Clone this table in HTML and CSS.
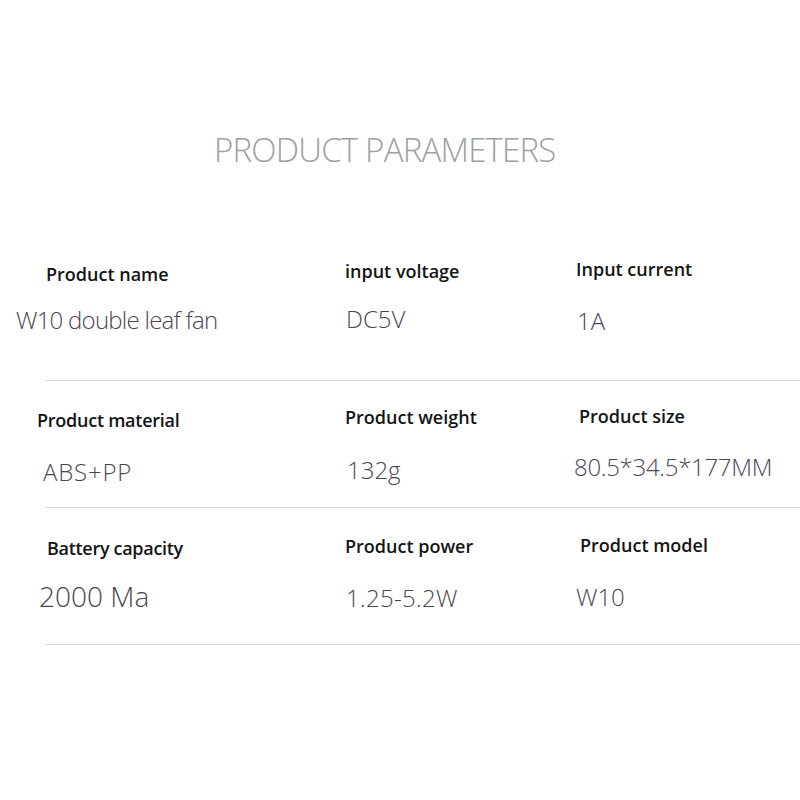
FILE: index.html
```html
<!DOCTYPE html>
<html>
<head>
<meta charset="utf-8">
<link rel="stylesheet" href="styles.css">
</head>
<body>
<h1 class="title">PRODUCT PARAMETERS</h1>
<div class="table">
  <div class="row row-1">
    <div class="cell a1"><div class="label">Product name</div><div class="value">W10 double leaf fan</div></div>
    <div class="cell a2"><div class="label">input voltage</div><div class="value">DC5V</div></div>
    <div class="cell a3"><div class="label">Input current</div><div class="value">1A</div></div>
  </div>
  <div class="rule"></div>
  <div class="row row-2">
    <div class="cell b1"><div class="label">Product material</div><div class="value">ABS+PP</div></div>
    <div class="cell b2"><div class="label">Product weight</div><div class="value">132g</div></div>
    <div class="cell b3"><div class="label">Product size</div><div class="value">80.5*34.5*177MM</div></div>
  </div>
  <div class="rule"></div>
  <div class="row row-3">
    <div class="cell c1"><div class="label">Battery capacity</div><div class="value">2000 Ma</div></div>
    <div class="cell c2"><div class="label">Product power</div><div class="value">1.25-5.2W</div></div>
    <div class="cell c3"><div class="label">Product model</div><div class="value">W10</div></div>
  </div>
  <div class="rule"></div>
</div>
</body>
</html>
```
FILE: styles.css
```css
html, body {
  margin: 0;
  padding: 0;
  background: #ffffff;
}
body {
  width: 800px;
  height: 800px;
  overflow: hidden;
  font-family: "Open Sans", "Noto Sans", sans-serif;
}
.title {
  margin: 133px 0 0 214px;
  font-size: 33px;
  line-height: 33px;
  font-weight: 300;
  letter-spacing: -0.8px;
  color: #a0a0a0;
  white-space: nowrap;
}
.table {
  margin-top: 74px;
}
.row {
  display: grid;
  grid-template-columns: 346px 231px 1fr;
}
.row-1 { height: 140px; }
.row-2 { height: 126px; }
.row-3 { height: 136px; }
.rule {
  height: 1px;
  margin-left: 45px;
  background: #d9d9d9;
}
.label {
  font-size: 18px;
  line-height: 18px;
  font-weight: 600;
  color: #141414;
  white-space: nowrap;
}
.value {
  font-size: 24px;
  line-height: 24px;
  font-weight: 300;
  color: #4e4553;
  white-space: nowrap;
}
.a1 .label { margin: 25px 0 0 46px; }
.a1 .value { margin: 25px 0 0 16px; letter-spacing: -0.75px; }
.a2 .label { margin: 22px 0 0 -1px; }
.a2 .value { margin: 27px 0 0 0; }
.a3 .label { margin: 20px 0 0 -1px; }
.a3 .value { margin: 31px 0 0 0; }
.b1 .label { margin: 30px 0 0 37px; letter-spacing: -0.25px; }
.b1 .value { margin: 31px 0 0 43px; letter-spacing: 0.8px; }
.b2 .label { margin: 27px 0 0 -1px; }
.b2 .value { margin: 32px 0 0 1px; }
.b3 .label { margin: 26px 0 0 2px; }
.b3 .value { margin: 30px 0 0 -3px; letter-spacing: -0.3px; }
.c1 .label { margin: 31px 0 0 47px; letter-spacing: -0.3px; }
.c1 .value { margin: 25px 0 0 39px; font-size: 28px; line-height: 28px; }
.c2 .label { margin: 29px 0 0 -1px; }
.c2 .value { margin: 31px 0 0 0; letter-spacing: 0.3px; }
.c3 .label { margin: 28px 0 0 3px; }
.c3 .value { margin: 31px 0 0 -1px; }
```
